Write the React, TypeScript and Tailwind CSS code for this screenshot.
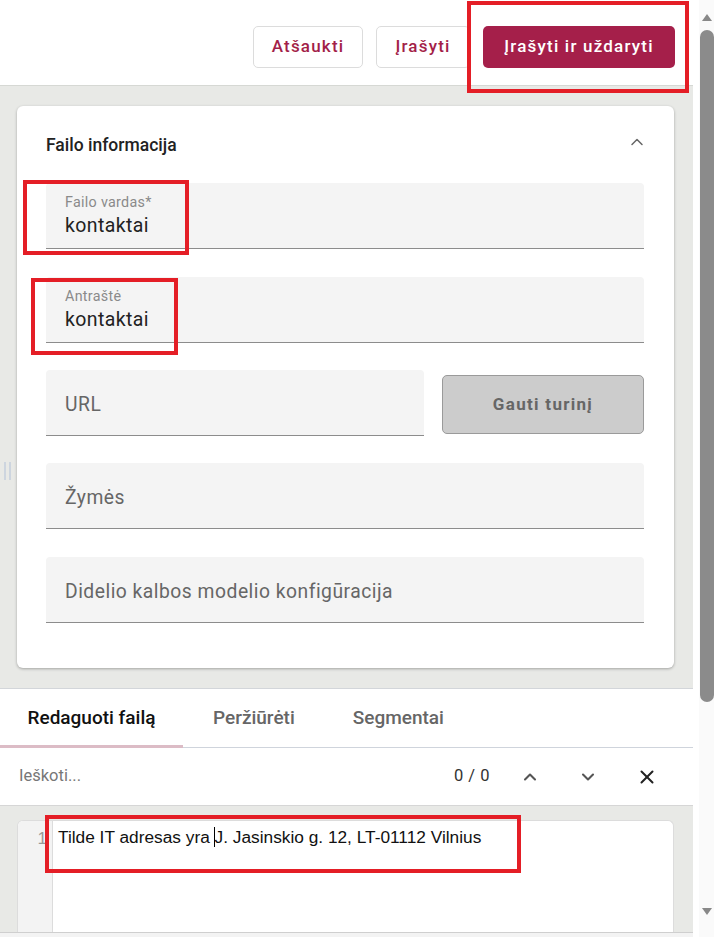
import { ChevronUp, ChevronDown, X } from "lucide-react";

function Field({ label, value, placeholder, className = "" }: { label?: string; value?: string; placeholder?: string; className?: string }) {
  return (
    <div className={`h-[66px] bg-[#f4f4f4] rounded-t-[4px] border-b border-[#8c8c8c] px-[19px] flex flex-col ${label ? "justify-start pt-[10px]" : "justify-center pt-[5px]"} ${className}`}>
      {label ? (
        <>
          <span className="text-[14.3px] leading-[18px] text-[#8a8a8a] tracking-[0.3px]">{label}</span>
          <span className="text-[19.5px] leading-[26px] text-[#222] tracking-[0.4px] mt-[2px]">{value}</span>
        </>
      ) : (
        <span className="text-[19.3px] leading-[26px] text-[#666] tracking-[0.5px]">{placeholder}</span>
      )}
    </div>
  );
}

function App() {
  return (
    <div className="relative w-[714px] h-[937px] flex bg-white overflow-hidden font-['Roboto',sans-serif]">
      <div className="w-[693px] flex flex-col">
        {/* top actions */}
        <header className="h-[86px] flex items-center justify-end gap-[13px] pr-[18px] pt-[8px] border-b border-[#d6d8d4]">
          <button className="w-[110px] h-[42px] border border-[#dcdcdc] rounded-[5px] text-[17px] font-medium tracking-[1.2px] text-[#a31f49]">
            Atšaukti
          </button>
          <button className="w-[94px] h-[42px] border border-[#dcdcdc] rounded-[5px] text-[17px] font-medium tracking-[1.2px] text-[#a31f49]">
            Įrašyti
          </button>
          <button className="w-[192px] h-[42px] rounded-[5px] bg-[#a51f4a] text-[17px] font-medium tracking-[1.2px] text-white">
            Įrašyti ir uždaryti
          </button>
        </header>

        {/* info card */}
        <section className="relative bg-[#e8e9e6] pl-[17px] pr-[19px] pt-[20px] pb-[20px] border-b border-[#d3d6da]">
          <div className="absolute left-[4px] top-[376px] flex gap-[3px]">
            <span className="w-[2px] h-[18px] bg-[#cdd5df]" />
            <span className="w-[2px] h-[18px] bg-[#cdd5df]" />
          </div>
          <div className="bg-white rounded-[6px] shadow-[0_1px_3px_rgba(0,0,0,0.3)] pl-[29px] pr-[30px] pt-[28px] pb-[45px]">
            <div className="flex items-center justify-between h-[22px] mb-[27px]">
              <h2 className="text-[17.5px] font-medium text-[#222]">Failo informacija</h2>
              <ChevronUp className="w-[20px] h-[20px] text-[#666] -mr-[3px] -mt-[6px]" strokeWidth={1.8} />
            </div>
            <Field label="Failo vardas*" value="kontaktai" />
            <Field label="Antraštė" value="kontaktai" className="mt-[28px]" />
            <div className="flex items-start gap-[18px] mt-[27px]">
              <Field placeholder="URL" className="w-[378px]" />
              <button className="mt-[5px] flex-1 h-[59px] bg-[#cccccc] border border-[#9a9a9a] rounded-[5px] text-[17px] font-bold tracking-[1.3px] text-[#666]">
                Gauti turinį
              </button>
            </div>
            <Field placeholder="Žymės" className="mt-[27px]" />
            <Field placeholder="Didelio kalbos modelio konfigūracija" className="mt-[28px]" />
          </div>
        </section>

        {/* tabs */}
        <nav className="h-[59px] flex border-b border-[#cfd4dc]">
          <div className="relative w-[183px] flex items-center justify-center text-[19px] font-medium text-[#111]">
            Redaguoti failą
            <span className="absolute left-0 right-0 -bottom-[1px] h-[3px] bg-[#dcbcc6]" />
          </div>
          <div className="px-[30px] flex items-center text-[19px] font-medium text-[#666]">Peržiūrėti</div>
          <div className="px-[28px] flex items-center text-[19px] font-medium text-[#666]">Segmentai</div>
        </nav>

        {/* search */}
        <div className="h-[58px] flex items-center pl-[19px] pr-[35px] border-b border-[#d6d6d6]">
          <span className="flex-1 text-[16.5px] text-[#777]">Ieškoti...</span>
          <span className="text-[16.5px] text-[#333] tracking-[0.5px]">0 / 0</span>
          <ChevronUp className="ml-[30px] w-[20px] h-[20px] text-[#555]" strokeWidth={2.5} />
          <ChevronDown className="ml-[38px] w-[20px] h-[20px] text-[#555]" strokeWidth={2.5} />
          <X className="ml-[38px] w-[22px] h-[22px] text-[#222]" strokeWidth={2.2} />
        </div>

        {/* editor */}
        <div className="flex-1 bg-[#e8e9e6] pl-[17px] pr-[19px] pt-[14px] border-b border-[#cfcfcf]">
          <div className="h-full flex bg-white rounded-t-[6px] border border-b-0 border-[#dcdcdc] overflow-hidden">
            <div className="w-[35px] bg-[#f3f3f3] border-r border-[#dcdcdc] text-right pr-[5px] pt-[5px] text-[17px] text-[#999] font-['Liberation_Sans',sans-serif]">
              1
            </div>
            <div className="pl-[5px] pt-[4px] text-[17.3px] leading-[24px] text-[#111] font-['Liberation_Sans',sans-serif]">
              Tilde IT adresas yra <span className="inline-block w-px h-[20px] bg-black align-[-4px] -ml-[1px]" />J. Jasinskio g. 12, LT-01112 Vilnius
            </div>
          </div>
        </div>
        <div className="h-[4px] bg-[#f3f3f3]" />
      </div>

      {/* scrollbar */}
      <div className="flex-1 flex">
        <div className="w-[6px]" />
        <div className="flex-1 flex flex-col items-center bg-[#fafafa]">
          <div className="mt-[14px] w-0 h-0 border-l-[5px] border-r-[5px] border-b-[7px] border-l-transparent border-r-transparent border-b-[#888]" />
          <div className="mt-[9px] w-[14px] h-[672px] rounded-[7px] bg-[#8b8b8b]" />
          <div className="mt-[206px] w-0 h-0 border-l-[5px] border-r-[5px] border-t-[7px] border-l-transparent border-r-transparent border-t-[#888]" />
        </div>
      </div>

      {/* red annotation boxes */}
      <div className="absolute left-[467px] top-[1px] w-[222px] h-[92px] border-[4px] border-[#e41e26] pointer-events-none" />
      <div className="absolute left-[23px] top-[180px] w-[166px] h-[75px] border-[4px] border-[#e41e26] pointer-events-none" />
      <div className="absolute left-[31px] top-[278px] w-[147px] h-[77px] border-[4px] border-[#e41e26] pointer-events-none" />
      <div className="absolute left-[45px] top-[815px] w-[476px] h-[58px] border-[4px] border-[#e41e26] pointer-events-none" />
    </div>
  );
}

export default App;
